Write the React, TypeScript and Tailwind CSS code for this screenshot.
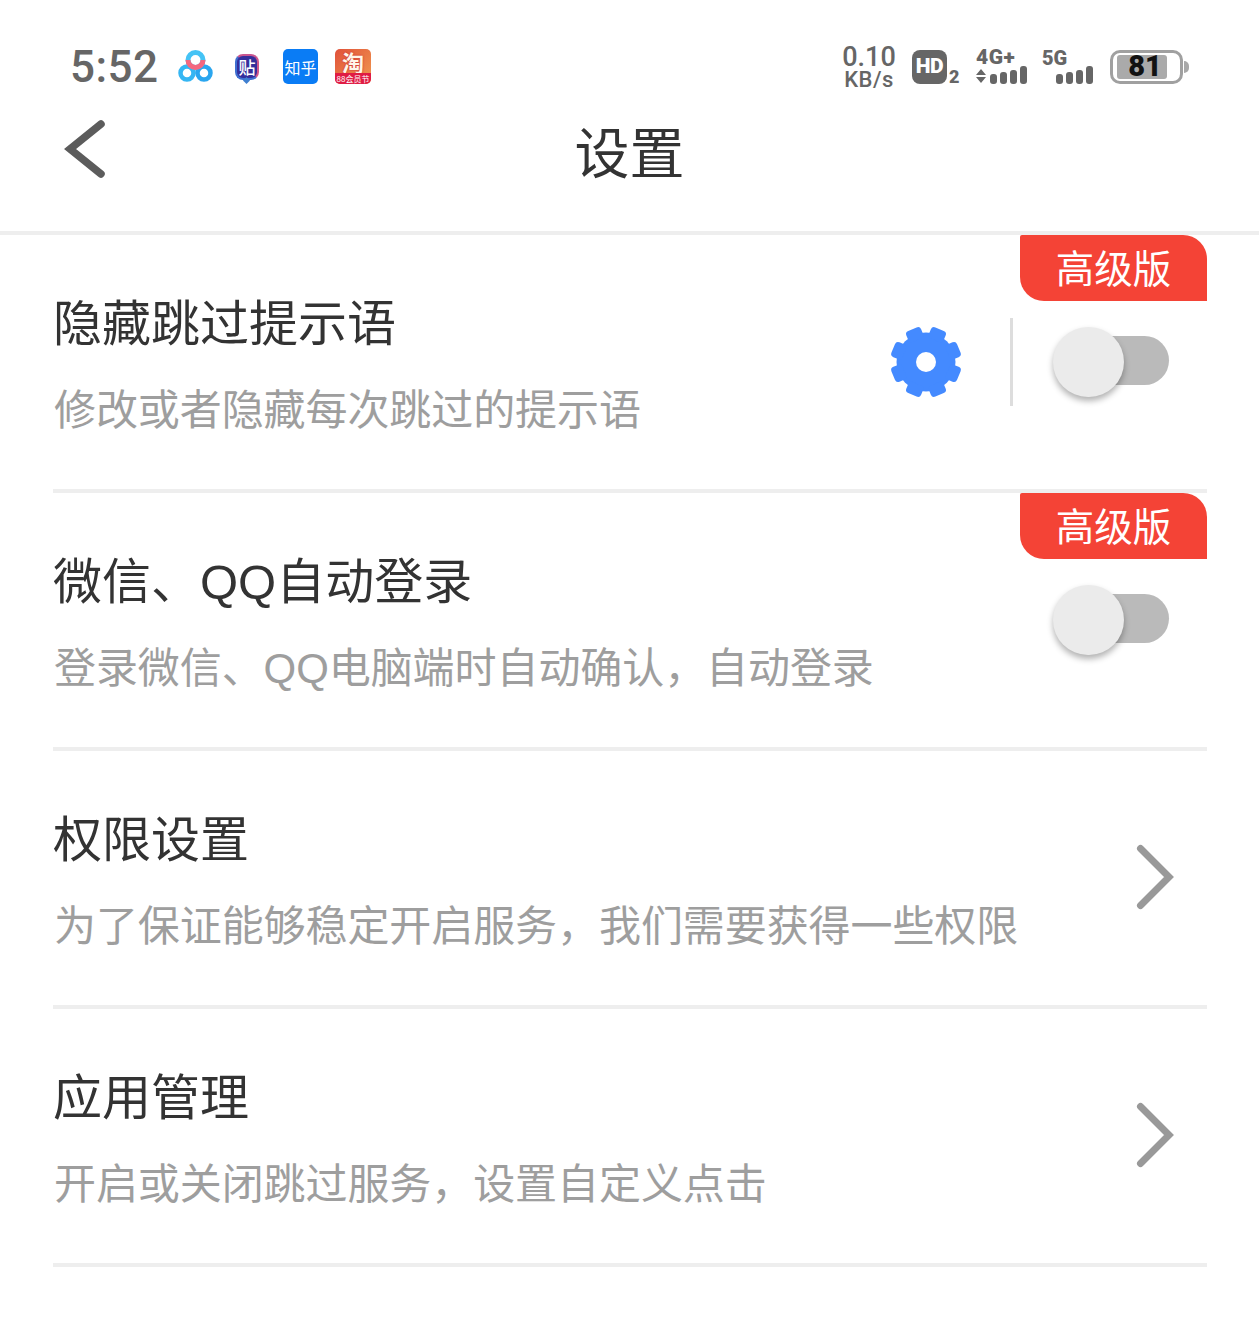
import type { ReactNode } from 'react'

const cjk = { fontFamily: '"Noto Sans CJK SC", "Noto Sans", sans-serif' }
const rowFont = { fontFamily: '"Liberation Sans", "Noto Sans CJK SC", sans-serif' }
const roboto = { fontFamily: 'Roboto, sans-serif' }

function BaiduIcon() {
  return (
    <svg width="36" height="36" viewBox="0 0 36 36" fill="none">
      <circle cx="10" cy="24" r="6.5" stroke="#35b6f3" strokeWidth="4.5" />
      <circle cx="27" cy="24" r="6.5" stroke="#2aa6ef" strokeWidth="4.5" />
      <circle cx="18.5" cy="11" r="7.5" stroke="#45c3f5" strokeWidth="5" />
      <path d="M11 11a7.5 7.5 0 0 0 15 0" stroke="#f4677f" strokeWidth="5" />
    </svg>
  )
}

function TiebaIcon() {
  return (
    <div className="relative flex h-[26px] w-[24px] items-center justify-center rounded-[8px] border-2 border-t-[#c9558f] border-r-[#d0568a] border-b-[#3f6fd0] border-l-[#3f6fd0] bg-[#352f9c] text-[17px] leading-none font-medium text-white" style={cjk}>
      贴
      <div className="absolute -bottom-[5px] left-[7px] h-[5px] w-[5px] rotate-45 bg-[#3f7fd0]" />
    </div>
  )
}

function ZhihuIcon() {
  return (
    <div className="flex h-[35px] w-[35px] items-center justify-center rounded-[5px] bg-[#0a7cf5] text-[16px] leading-none whitespace-nowrap text-white" style={cjk}>
      知乎
    </div>
  )
}

function TaobaoIcon() {
  return (
    <div className="flex h-[35px] w-[36px] flex-col items-center rounded-[5px] bg-linear-to-br from-[#e0503a] to-[#f09a50] text-white" style={cjk}>
      <div className="flex h-[24px] items-center text-[22px] leading-none font-bold text-[#fff6e8] [text-shadow:0_0_2px_#c41c2c]">淘</div>
      <div className="flex h-[11px] w-full items-center justify-center rounded-b-[5px] bg-[#e01c44] text-[8px] leading-none whitespace-nowrap">88会员节</div>
    </div>
  )
}

function SignalBars() {
  return (
    <div className="flex items-end gap-[3px]">
      {[10, 12, 14, 18].map((h, i) => (
        <div key={i} className="w-[7px] rounded-[3px] bg-[#666666]" style={{ height: h }} />
      ))}
    </div>
  )
}

function StatusBar() {
  return (
    <div className="flex h-[100px] items-center justify-between pt-[33px] pr-[70px] pl-[71px]">
      <div className="flex items-center">
        <span className="-ml-[1px] w-[107px] text-[44px] leading-none font-medium tracking-[0.5px] text-[#666666]" style={roboto}>5:52</span>
        <BaiduIcon />
        <div className="ml-[22px]"><TiebaIcon /></div>
        <div className="ml-[24px]"><ZhihuIcon /></div>
        <div className="ml-[17px]"><TaobaoIcon /></div>
      </div>
      <div className="flex items-center text-[#666666]" style={roboto}>
        <div className="flex w-[52px] flex-col items-center pt-[2px] font-medium">
          <span className="text-[27px] leading-[24px]">0.10</span>
          <span className="text-[22px] leading-[22px] tracking-[0.5px]">KB/s</span>
        </div>
        <div className="ml-[17px] flex items-end">
          <div className="flex h-[34px] w-[35px] items-center justify-center rounded-[8px] bg-[#666666] text-[21px] leading-none font-black tracking-[-0.5px] text-white">HD</div>
          <span className="ml-[2px] w-[13px] text-[18px] leading-[14px] font-black">2</span>
        </div>
        <div className="ml-[14px] flex w-[51px] flex-col">
          <span className="text-[21px] leading-[17px] font-black tracking-[0.5px]">4G+</span>
          <div className="flex h-[18px] items-end">
            <svg width="10" height="16" viewBox="0 0 10 16" className="mr-[4px]">
              <path d="M5 1 10 7H0zM5 15 10 9H0z" fill="#666666" />
            </svg>
            <SignalBars />
          </div>
        </div>
        <div className="ml-[15px] flex w-[51px] flex-col pt-[2px]">
          <span className="text-[20px] leading-[15px] font-black">5G</span>
          <div className="flex h-[18px] items-end justify-end">
            <SignalBars />
          </div>
        </div>
        <div className="ml-[17px] flex items-center">
          <div className="flex h-[34px] w-[73px] items-center rounded-[10px] border-[3px] border-[#a0a0a0] px-[4px] py-[2px]">
            <div className="flex h-full w-[50px] items-center justify-center rounded-[3px] bg-[#aaaaaa] pl-[6px] text-[29px] leading-none font-black text-[#111111]">81</div>
          </div>
          <div className="ml-[1px] h-[12px] w-[5px] rounded-r-[6px] bg-[#a8a8a8]" />
        </div>
      </div>
    </div>
  )
}

function Gear() {
  const angles = [22.5, 67.5, 112.5, 157.5, 202.5, 247.5, 292.5, 337.5]
  return (
    <svg width="72" height="72" viewBox="0 0 72 72">
      <circle cx="36" cy="36" r="29.5" fill="#448aff" />
      {angles.map((a) => (
        <rect key={a} x="28" y="0.5" width="16" height="12" rx="3.5" fill="#448aff" transform={`rotate(${a} 36 36)`} />
      ))}
      <circle cx="36" cy="36" r="10" fill="#ffffff" />
    </svg>
  )
}

function Toggle() {
  return (
    <div className="relative h-[72px] w-[116px]">
      <div className="absolute top-[10px] right-0 h-[49px] w-[70px] rounded-r-[25px] bg-[#bababa]" />
      <div className="absolute top-[1px] left-0 h-[70px] w-[71px] rounded-full bg-[#ebebeb] shadow-[0_4px_6px_rgba(0,0,0,0.3)]" />
    </div>
  )
}

function Chevron() {
  return (
    <svg width="40" height="72" viewBox="0 0 40 72" fill="none">
      <path d="M4.5 6.5 33 35 4.5 63.5" stroke="#999999" strokeWidth="7" strokeLinecap="round" />
    </svg>
  )
}

function Badge() {
  return (
    <div className="absolute top-0 right-0 flex h-[66px] w-[187px] items-center justify-center rounded-tl-[2px] rounded-tr-[24px] rounded-bl-[24px] bg-[#f44336] pt-[5px] text-[38.5px] leading-none text-white">
      高级版
    </div>
  )
}

function Row({ title, desc, badge, right }: { title: string; desc: string; badge?: boolean; right: ReactNode }) {
  return (
    <div className="relative flex h-[258px] items-center justify-between border-b-[4px] border-[#eeeeee]" style={rowFont}>
      {badge && <Badge />}
      <div className="flex flex-col pt-[8px]">
        <div className="text-[49px] leading-[64px] text-[#333333]">{title}</div>
        <div className="mt-[25px] pl-[1px] text-[42px] leading-[60px] tracking-[-0.08px] text-[#9e9e9e]">{desc}</div>
      </div>
      {right}
    </div>
  )
}

export default function App() {
  return (
    <div className="h-[1319px] w-[1259px] overflow-hidden bg-white" style={cjk}>
      <StatusBar />
      <div className="relative flex h-[135px] items-center justify-center border-b-[4px] border-[#eeeeee] pb-[32px]">
        <svg width="44" height="64" viewBox="0 0 44 64" fill="none" className="absolute top-[19px] left-[63px]">
          <path d="M38 5 7 30 38 55" stroke="#5c5c5c" strokeWidth="7.5" strokeLinecap="round" />
        </svg>
        <div className="text-[55px] leading-none text-[#333333]">设置</div>
      </div>
      <div className="ml-[53px] w-[1154px]">
        <Row
          badge
          title="隐藏跳过提示语"
          desc="修改或者隐藏每次跳过的提示语"
          right={
            <div className="flex items-center pr-[38px]">
              <Gear />
              <div className="mr-[40px] ml-[48px] h-[88px] w-[3px] bg-[#dddddd]" />
              <Toggle />
            </div>
          }
        />
        <Row
          badge
          title="微信、QQ自动登录"
          desc="登录微信、QQ电脑端时自动确认，自动登录"
          right={
            <div className="pr-[38px]">
              <Toggle />
            </div>
          }
        />
        <Row
          title="权限设置"
          desc="为了保证能够稳定开启服务，我们需要获得一些权限"
          right={
            <div className="pr-[31px]">
              <Chevron />
            </div>
          }
        />
        <Row
          title="应用管理"
          desc="开启或关闭跳过服务，设置自定义点击"
          right={
            <div className="pr-[31px]">
              <Chevron />
            </div>
          }
        />
      </div>
    </div>
  )
}
